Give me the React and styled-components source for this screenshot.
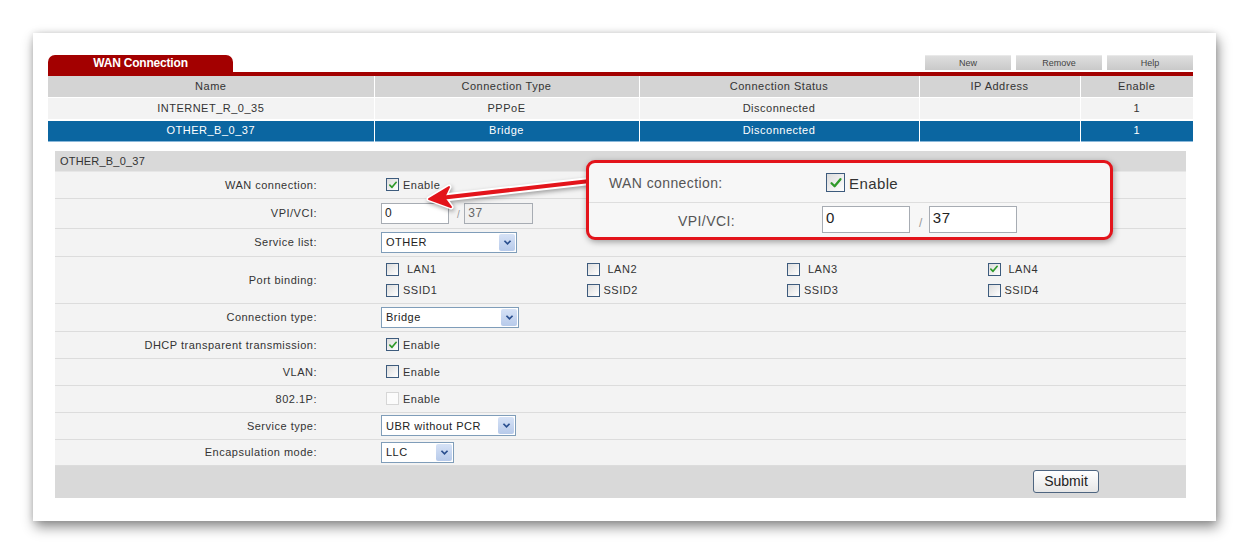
import React from "react";
import styled, { createGlobalStyle } from "styled-components";

const GlobalStyle = createGlobalStyle`
    * { box-sizing: border-box; }
    body {
        margin: 0;
        background: #ffffff;
        font-family: "Liberation Sans", Arial, sans-serif;
    }
`;

const columns = [
    { title: "Name", width: 326 },
    { title: "Connection Type", width: 265 },
    { title: "Connection Status", width: 280 },
    { title: "IP Address", width: 161 },
    { title: "Enable", width: 113 },
];

const connections = [
    { name: "INTERNET_R_0_35", type: "PPPoE", status: "Disconnected", ip: "", enable: "1" },
    { name: "OTHER_B_0_37", type: "Bridge", status: "Disconnected", ip: "", enable: "1", selected: true },
];

const ports = [
    { lan: "LAN1", ssid: "SSID1" },
    { lan: "LAN2", ssid: "SSID2" },
    { lan: "LAN3", ssid: "SSID3" },
    { lan: "LAN4", ssid: "SSID4", checked: true },
];

const Check = ({ checked, disabled, big }) => (
    <Box $big={big} $disabled={disabled}>
        {checked && (
            <svg viewBox="0 0 12 12" width={big ? 14 : 10} height={big ? 14 : 10}>
                <path d="M2.2 6.2 L4.8 8.8 L9.8 2.8" fill="none" stroke="#2f9a2a" strokeWidth="2" strokeLinecap="round" strokeLinejoin="round" />
            </svg>
        )}
    </Box>
);

const Select = ({ value, width }) => (
    <SelectBox $w={width}>
        <span>{value}</span>
        <SelectButton>
            <svg viewBox="0 0 10 8" width="9" height="7">
                <path d="M1.5 2 L5 5.5 L8.5 2" fill="none" stroke="#2a4f8f" strokeWidth="2" />
            </svg>
        </SelectButton>
    </SelectBox>
);

const App = () => {
    return (
        <Page>
            <GlobalStyle />
            <Card>
                <TopBar>
                    <Tab>WAN Connection</Tab>
                    <Buttons>
                        <BarButton>New</BarButton>
                        <BarButton>Remove</BarButton>
                        <BarButton>Help</BarButton>
                    </Buttons>
                </TopBar>
                <RedLine />

                <Table>
                    <colgroup>
                        {columns.map((c) => <col key={c.title} style={{ width: c.width }} />)}
                    </colgroup>
                    <thead>
                        <tr>
                            {columns.map((c) => <Th key={c.title}>{c.title}</Th>)}
                        </tr>
                    </thead>
                    <tbody>
                        {connections.map((r) => (
                            <Tr key={r.name} $selected={r.selected}>
                                <Td>{r.name}</Td>
                                <Td>{r.type}</Td>
                                <Td>{r.status}</Td>
                                <Td>{r.ip}</Td>
                                <Td>{r.enable}</Td>
                            </Tr>
                        ))}
                    </tbody>
                </Table>

                <Form>
                    <FormTitle>OTHER_B_0_37</FormTitle>

                    <Row $h={27}>
                        <Label>WAN connection:</Label>
                        <Value><Check checked /><CheckText>Enable</CheckText></Value>
                    </Row>
                    <Row $h={30}>
                        <Label>VPI/VCI:</Label>
                        <Value>
                            <Input $w={68}>0</Input>
                            <Slash>/</Slash>
                            <Input $w={69} $disabled>37</Input>
                        </Value>
                    </Row>
                    <Row $h={28}>
                        <Label>Service list:</Label>
                        <Value><Select value="OTHER" width={136} /></Value>
                    </Row>
                    <Row $h={47}>
                        <Label>Port binding:</Label>
                        <Value>
                            <PortGrid>
                                {ports.map((p) => (
                                    <Port key={p.lan}>
                                        <PortItem><Check checked={p.checked} /><CheckText $gap={8}>{p.lan}</CheckText></PortItem>
                                        <PortItem><Check /><CheckText>{p.ssid}</CheckText></PortItem>
                                    </Port>
                                ))}
                            </PortGrid>
                        </Value>
                    </Row>
                    <Row $h={28}>
                        <Label>Connection type:</Label>
                        <Value><Select value="Bridge" width={138} /></Value>
                    </Row>
                    <Row $h={27}>
                        <Label>DHCP transparent transmission:</Label>
                        <Value><Check checked /><CheckText>Enable</CheckText></Value>
                    </Row>
                    <Row $h={27}>
                        <Label>VLAN:</Label>
                        <Value><Check /><CheckText>Enable</CheckText></Value>
                    </Row>
                    <Row $h={27}>
                        <Label>802.1P:</Label>
                        <Value><Check disabled /><CheckText>Enable</CheckText></Value>
                    </Row>
                    <Row $h={27}>
                        <Label>Service type:</Label>
                        <Value><Select value="UBR without PCR" width={135} /></Value>
                    </Row>
                    <Row $h={26}>
                        <Label>Encapsulation mode:</Label>
                        <Value><Select value="LLC" width={73} /></Value>
                    </Row>

                    <Footer>
                        <Submit>Submit</Submit>
                    </Footer>
                </Form>

                <Arrow viewBox="0 0 180 45" width="180" height="45">
                    <g strokeLinecap="round" strokeLinejoin="round">
                        <line x1="170" y1="11" x2="20" y2="28" stroke="#ffffff" strokeWidth="8" />
                        <polygon points="9,29 29,17 24,27.5 31,37" fill="#ffffff" stroke="#ffffff" strokeWidth="5" />
                        <line x1="170" y1="11" x2="20" y2="28" stroke="#e3141b" strokeWidth="4" />
                        <polygon points="9,29 29,17 24,27.5 31,37" fill="#e3141b" stroke="#e3141b" strokeWidth="2" />
                    </g>
                </Arrow>

                <Callout>
                    <CalloutRow $h={40} $line>
                        <CalloutLabel $w={217} $align="left">WAN connection:</CalloutLabel>
                        <Check checked big />
                        <CalloutText>Enable</CalloutText>
                    </CalloutRow>
                    <CalloutRow $h={33}>
                        <CalloutLabel $w={126} $align="right">VPI/VCI:</CalloutLabel>
                        <CalloutGap />
                        <BigInput>0</BigInput>
                        <BigSlash>/</BigSlash>
                        <BigInput>37</BigInput>
                    </CalloutRow>
                </Callout>
            </Card>
        </Page>
    );
};

const Page = styled.div`
    padding: 33px 0 0 33px;
    width: 1249px;
    height: 554px;
    overflow: hidden;
`;

const Card = styled.div`
    position: relative;
    width: 1183px;
    height: 488px;
    background: #ffffff;
    padding: 22px 23px 24px 15px;
    box-shadow: 2px 6px 12px rgba(0, 0, 0, 0.45), 0 0 6px rgba(0, 0, 0, 0.12);
    font-size: 11px;
    color: #333;
    letter-spacing: 0.5px;
`;

const TopBar = styled.div`
    display: flex;
    justify-content: space-between;
    height: 17px;
`;

const Tab = styled.div`
    width: 185px;
    height: 17px;
    background: #a30000;
    border-radius: 7px 7px 0 0;
    color: #fff;
    font-size: 12px;
    font-weight: bold;
    letter-spacing: -0.2px;
    text-align: center;
    line-height: 17px;
`;

const Buttons = styled.div`
    display: flex;
    gap: 5px;
`;

const BarButton = styled.div`
    width: 86px;
    height: 15px;
    background: linear-gradient(#dedede, #c9c9c9);
    border-top: 1px solid #e9e9e9;
    color: #444;
    font-size: 9px;
    text-align: center;
    line-height: 14px;
    letter-spacing: 0;
`;

const RedLine = styled.div`
    height: 4px;
    background: #a30000;
`;

const Table = styled.table`
    width: 1145px;
    border-collapse: collapse;
    table-layout: fixed;
`;

const Th = styled.th`
    height: 21px;
    padding: 0;
    background: #d4d4d4;
    font-weight: normal;
    color: #333;
    border-left: 1px solid #fff;
    border-bottom: 1px solid #fff;
    &:first-child { border-left: none; }
`;

const Tr = styled.tr`
    background: ${(p) => (p.$selected ? "#0b66a1" : "#f3f3f3")};
    color: ${(p) => (p.$selected ? "#ffffff" : "#333")};
    height: ${(p) => (p.$selected ? "21px" : "23px")};
    border-bottom: ${(p) => (p.$selected ? "1px solid #8ab8da" : "2px solid #fff")};
`;

const Td = styled.td`
    padding: 0 0 1px 0;
    text-align: center;
    border-left: 1px solid #ffffff;
    &:first-child { border-left: none; }
`;

const Form = styled.div`
    margin: 9px 7px 0 7px;
    background: #f3f3f3;
`;

const FormTitle = styled.div`
    height: 21px;
    background: #d9d9d9;
    border-bottom: 1px solid #e6e6e6;
    padding-left: 5px;
    line-height: 20px;
    letter-spacing: 0.2px;
`;

const Row = styled.div`
    display: grid;
    grid-template-columns: 262px 1fr;
    align-items: center;
    height: ${(p) => p.$h}px;
    border-bottom: 1px solid #dcdcdc;
`;

const Label = styled.div`
    text-align: right;
`;

const Value = styled.div`
    display: flex;
    align-items: center;
    padding-left: 64px;
`;

const Box = styled.span`
    display: inline-flex;
    align-items: center;
    justify-content: center;
    flex: none;
    margin-left: ${(p) => (p.$big ? 0 : 5)}px;
    width: ${(p) => (p.$big ? 19 : 13)}px;
    height: ${(p) => (p.$big ? 19 : 13)}px;
    border: 1px solid ${(p) => (p.$disabled ? "#d6d6d6" : "#3d5b7d")};
    background: ${(p) => (p.$disabled ? "#fbfbfb" : "linear-gradient(135deg, #dcdcdc, #ffffff)")};
`;

const CheckText = styled.span`
    margin-left: ${(p) => p.$gap || 4}px;
`;

const Input = styled.div`
    width: ${(p) => p.$w}px;
    height: 21px;
    border: 1px solid #a7acb3;
    background: ${(p) => (p.$disabled ? "#f0f0f0" : "#ffffff")};
    color: ${(p) => (p.$disabled ? "#666" : "#222")};
    font-size: 12px;
    line-height: 19px;
    padding-left: 3px;
`;

const Slash = styled.span`
    color: #999;
    margin: 2px 4px 0 8px;
    font-size: 10px;
`;

const SelectBox = styled.div`
    display: flex;
    align-items: center;
    justify-content: space-between;
    width: ${(p) => p.$w}px;
    height: 21px;
    border: 1px solid #7f9db9;
    background: #ffffff;
    padding: 1px 1px 1px 4px;
    color: #222;
`;

const SelectButton = styled.span`
    display: flex;
    align-items: center;
    justify-content: center;
    width: 16px;
    height: 17px;
    background: linear-gradient(#d6e2f6, #b7caea);
    border-radius: 2px;
`;

const PortGrid = styled.div`
    display: grid;
    grid-template-columns: repeat(4, 200.5px);
`;

const Port = styled.div`
    display: flex;
    flex-direction: column;
    gap: 8px;
`;

const PortItem = styled.div`
    display: flex;
    align-items: center;
`;

const Footer = styled.div`
    display: flex;
    justify-content: flex-end;
    align-items: flex-start;
    height: 32px;
    background: #d9d9d9;
    padding: 4px 87px 0 0;
`;

const Submit = styled.div`
    width: 66px;
    height: 23px;
    border: 1px solid #4e6580;
    border-radius: 3px;
    background: linear-gradient(#ffffff, #e6e6e6);
    color: #222;
    font-size: 14px;
    letter-spacing: 0;
    text-align: center;
    line-height: 21px;
`;

const Arrow = styled.svg`
    position: absolute;
    left: 387px;
    top: 137px;
    filter: drop-shadow(1px 2px 2px rgba(0, 0, 0, 0.35));
`;

const Callout = styled.div`
    position: absolute;
    left: 553px;
    top: 127px;
    width: 527px;
    height: 80px;
    border: 3px solid #e3141b;
    border-radius: 9px;
    background: #f7f7f7;
    box-shadow: 1px 2px 6px rgba(0, 0, 0, 0.35);
    overflow: hidden;
`;

const CalloutRow = styled.div`
    display: flex;
    align-items: center;
    height: ${(p) => p.$h}px;
    padding-left: 20px;
    border-bottom: ${(p) => (p.$line ? "1px solid #dedede" : "none")};
`;

const CalloutLabel = styled.span`
    width: ${(p) => p.$w}px;
    text-align: ${(p) => p.$align};
    font-size: 14px;
    color: #555;
    letter-spacing: 0.4px;
    padding-top: ${(p) => (p.$align === "left" ? "0" : "2px")};
`;

const CalloutGap = styled.span`
    width: 87px;
`;

const CalloutText = styled.span`
    margin-left: 4px;
    font-size: 15px;
    color: #333;
    letter-spacing: 0.4px;
    padding-top: 2px;
`;

const BigInput = styled.div`
    width: 88px;
    height: 27px;
    border: 1px solid #a7acb3;
    background: #ffffff;
    font-size: 15px;
    color: #222;
    line-height: 22px;
    padding-left: 3px;
`;

const BigSlash = styled.span`
    color: #999;
    font-size: 12px;
    margin: 6px 6px 0 9px;
`;

export default App;
